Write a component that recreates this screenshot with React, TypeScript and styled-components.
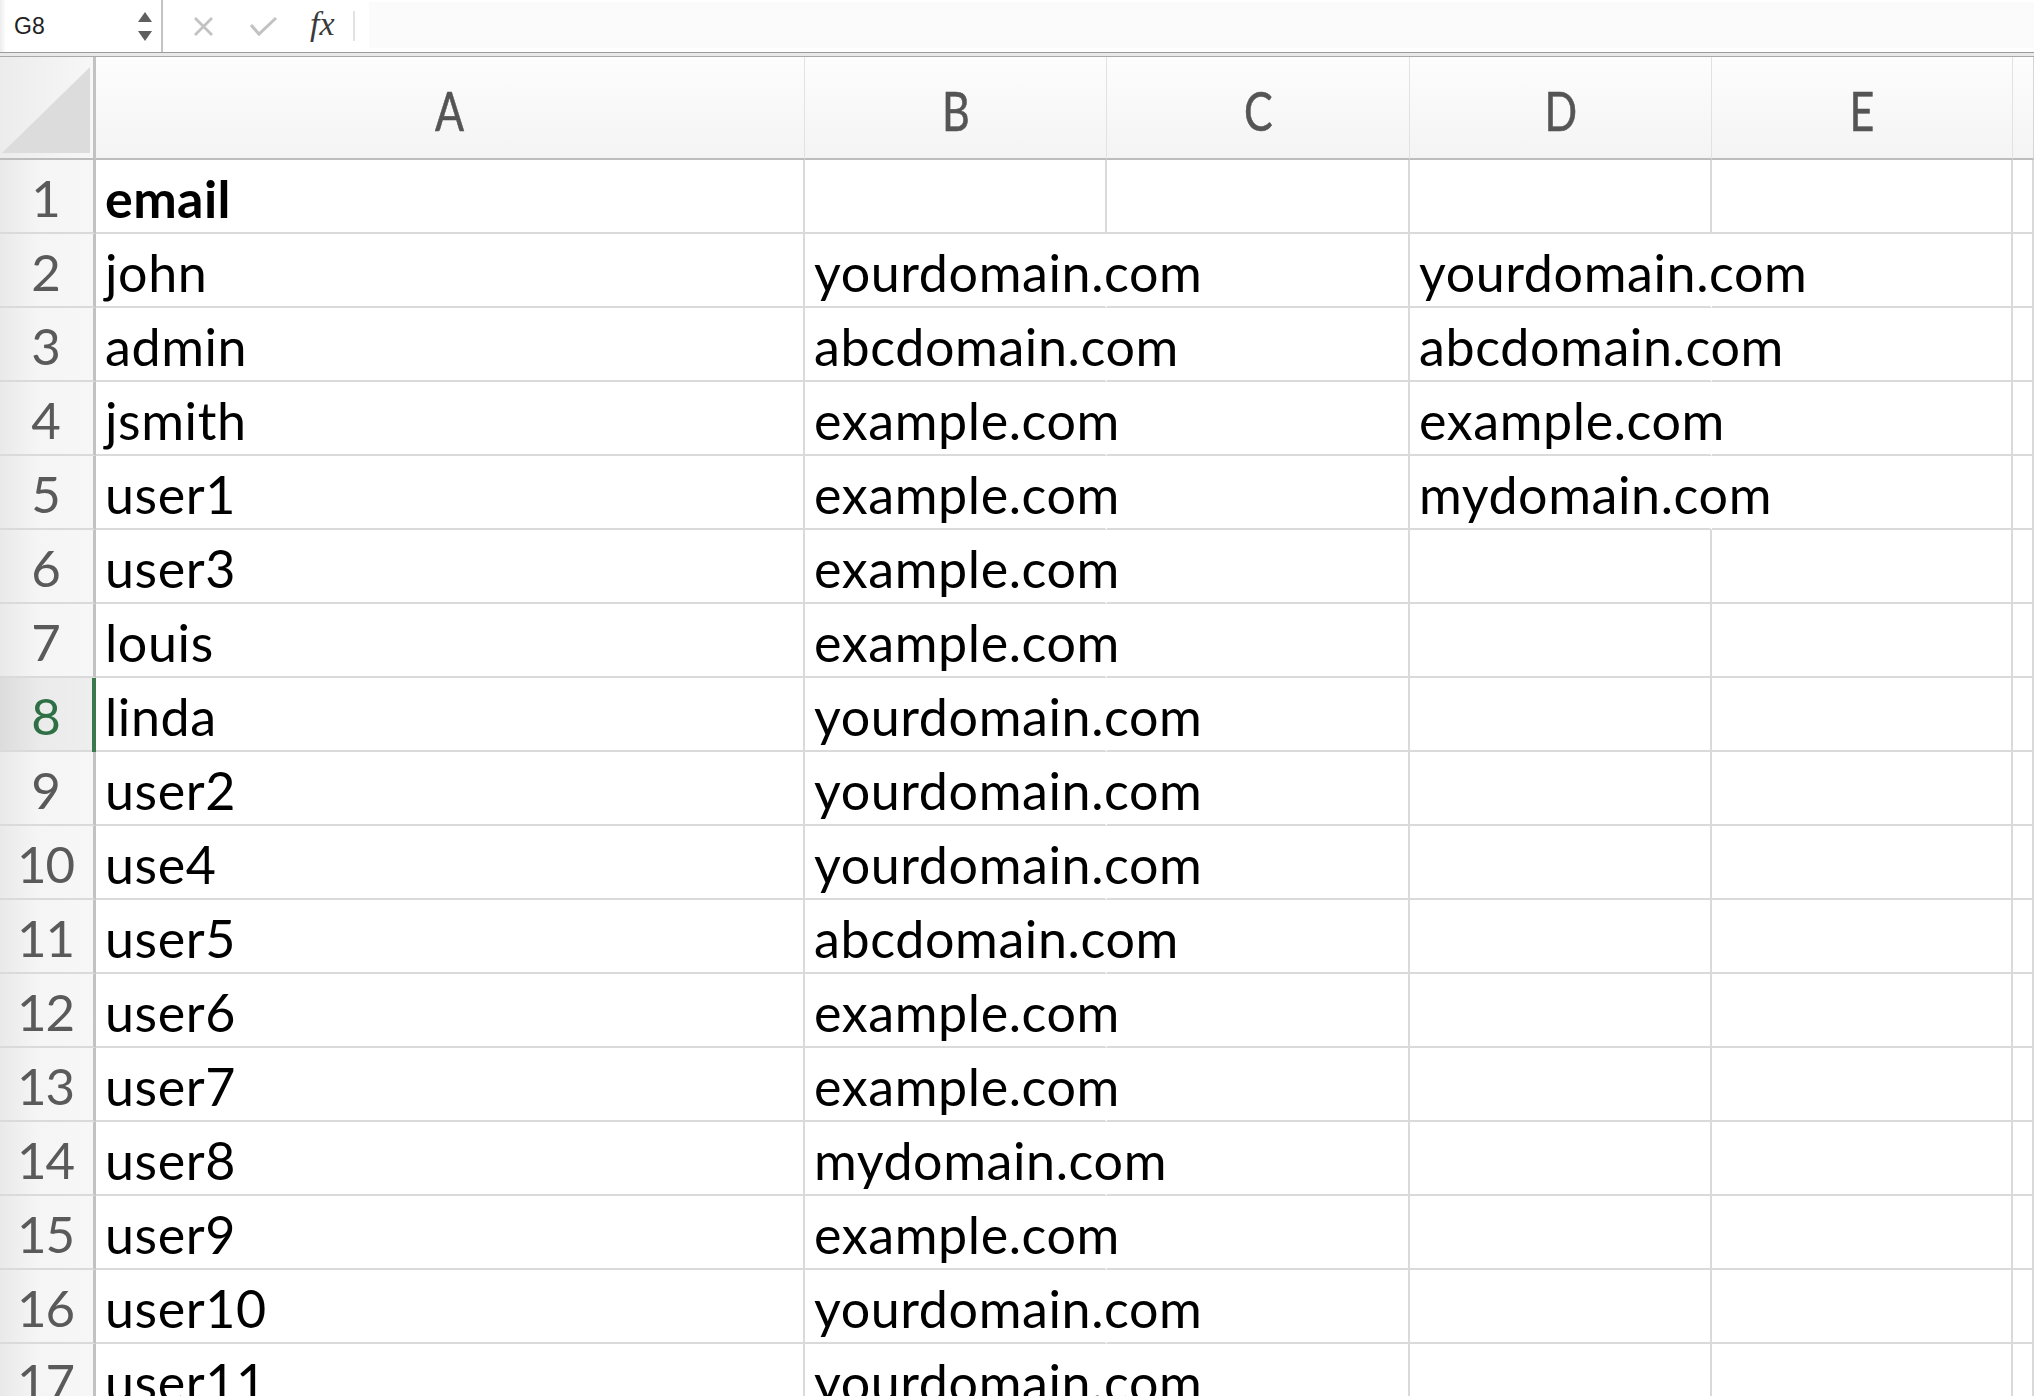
import styled, { createGlobalStyle } from "styled-components";

const GlobalStyle = createGlobalStyle`
	html, body {
		margin: 0;
		padding: 0;
		background: #fff;
		overflow: hidden;
	}
	body {
		font-family: Lato, "Open Sans", sans-serif;
	}
`;

const Page = styled.div`
	width: 2034px;
	height: 1396px;
	overflow: hidden;
	display: flex;
	flex-direction: column;
`;

const FormulaBar = styled.div`
	height: 52px;
	display: flex;
	align-items: stretch;
	background: #fff;
	border-bottom: 1px solid #9c9c9c;
	flex-shrink: 0;
`;

const NameBox = styled.div`
	width: 163px;
	display: flex;
	align-items: center;
	justify-content: space-between;
	padding: 0 9px 0 14px;
	box-sizing: border-box;
	background: linear-gradient(to right, #ececec 0px, #fff 6px);
	border-right: 2px solid #c4c4c4;
	font-family: "Liberation Sans", Arial, sans-serif;
	font-size: 23px;
	color: #222;
`;

const Spinner = styled.div`
	display: flex;
	flex-direction: column;
	gap: 9px;
`;

const Arrow = styled.div<{ $up?: boolean }>`
	width: 0;
	height: 0;
	border-left: 7px solid transparent;
	border-right: 7px solid transparent;
	${(p) =>
		p.$up
			? "border-bottom: 10px solid #5f5f5f;"
			: "border-top: 10px solid #5f5f5f;"}
`;

const Tools = styled.div`
	display: flex;
	align-items: center;
	padding-left: 30px;
`;

const ToolIcon = styled.div<{ $w: number }>`
	width: ${(p) => p.$w}px;
	display: flex;
	align-items: center;
	justify-content: flex-start;
`;

const Fx = styled.span`
	font-family: "Liberation Serif", "Times New Roman", serif;
	font-style: italic;
	font-size: 34px;
	line-height: 34px;
	color: #3a3a3a;
	margin: -4px 0 0 3px;
`;

const Separator = styled.div`
	align-self: center;
	width: 2px;
	height: 30px;
	background: #e2e2e2;
	margin: 0 14px 0 0;
`;

const FormulaInput = styled.div`
	flex: 1;
	background: #fbfbfb;
	margin: 2px 0 4px;
`;

const BarGap = styled.div`
	height: 3px;
	background: #e9e9e9;
	border-bottom: 1px solid #a9a9a9;
	flex-shrink: 0;
`;

const Grid = styled.div`
	display: grid;
	grid-template-columns: 96px 709px 302px 303px 302px 301px 1fr;
	grid-auto-rows: 74px;
	grid-template-rows: 103px;
`;

const Corner = styled.div`
	background: linear-gradient(to right, #ececec, #f7f7f7);
	border-right: 3px solid #c2c2c2;
	border-bottom: 2px solid #bdbdbd;
	display: flex;
	align-items: flex-end;
	justify-content: flex-end;
	padding: 0 3px 5px 2px;
	box-sizing: border-box;
`;

const CornerTriangle = styled.div`
	width: 88px;
	height: 86px;
	background: #dcdcdc;
	clip-path: polygon(100% 0, 100% 100%, 0 100%);
`;

const ColHeader = styled.div<{ $last?: boolean }>`
	background: linear-gradient(to bottom, #fdfdfd, #f4f4f4);
	border-bottom: 2px solid #bdbdbd;
	border-right: 1px solid ${(p) => (p.$last ? "#d6d6d6" : "#e2e2e2")};
	display: flex;
	align-items: center;
	justify-content: center;
	box-sizing: border-box;
	padding-top: 4px;
`;

const ColLetter = styled.span`
	display: inline-block;
	font-size: 55px;
	color: #555;
	transform: scaleX(0.78);
	-webkit-text-stroke: 0.6px #555;
`;

const RowHeader = styled.div<{ $active?: boolean }>`
	background: ${(p) =>
		p.$active
			? "linear-gradient(to right, #dcdcdc, #ebebeb 45%, #eeeeee)"
			: "linear-gradient(to right, #e9e9e9, #f5f5f5 40%, #f7f7f7)"};
	border-right: 3px solid #c2c2c2;
	border-bottom: 2px solid #dadada;
	box-sizing: border-box;
	display: flex;
	align-items: flex-end;
	justify-content: center;
	padding: 0 2px 9px 0;
	font-size: 51px;
	line-height: 50px;
	letter-spacing: -1px;
	color: ${(p) => (p.$active ? "#2f6f45" : "#5a5a5a")};
	position: relative;
	${(p) =>
		p.$active &&
		`
		&::after {
			content: "";
			position: absolute;
			right: -3px;
			top: 0;
			bottom: -2px;
			width: 4px;
			background: #3c7a4e;
		}
	`}
`;

const Cell = styled.div<{ $bold?: boolean; $noRight?: boolean }>`
	border-right: 2px solid ${(p) => (p.$noRight ? "transparent" : "#dadada")};
	border-bottom: 2px solid #dadada;
	box-sizing: border-box;
	display: flex;
	align-items: flex-end;
	padding: 0 0 9px 9px;
	font-size: 52px;
	line-height: 50px;
	letter-spacing: ${(p) => (p.$bold ? "0.4px" : "0.6px")};
	font-weight: ${(p) => (p.$bold ? 700 : 400)};
	color: #000;
	white-space: nowrap;
	overflow: visible;
	min-width: 0;
`;

const names = [
	"email",
	"john",
	"admin",
	"jsmith",
	"user1",
	"user3",
	"louis",
	"linda",
	"user2",
	"use4",
	"user5",
	"user6",
	"user7",
	"user8",
	"user9",
	"user10",
	"user11",
];

const domainsB = [
	"",
	"yourdomain.com",
	"abcdomain.com",
	"example.com",
	"example.com",
	"example.com",
	"example.com",
	"yourdomain.com",
	"yourdomain.com",
	"yourdomain.com",
	"abcdomain.com",
	"example.com",
	"example.com",
	"mydomain.com",
	"example.com",
	"yourdomain.com",
	"yourdomain.com",
];

const domainsD = ["", "yourdomain.com", "abcdomain.com", "example.com", "mydomain.com"];

const X = () => (
	<svg width="21" height="21" viewBox="0 0 21 21">
		<path d="M2 2 L19 19 M19 2 L2 19" stroke="#c2c2c2" strokeWidth="2.8" fill="none" />
	</svg>
);

const Check = () => (
	<svg width="29" height="21" viewBox="0 0 29 21">
		<path d="M2 9 L10 18 L27 2" stroke="#c2c2c2" strokeWidth="3" fill="none" />
	</svg>
);

const App = () => {
	return (
		<Page>
			<GlobalStyle />
			<FormulaBar>
				<NameBox>
					<span>G8</span>
					<Spinner>
						<Arrow $up />
						<Arrow />
					</Spinner>
				</NameBox>
				<Tools>
					<ToolIcon $w={56}>
						<X />
					</ToolIcon>
					<ToolIcon $w={58}>
						<Check />
					</ToolIcon>
					<ToolIcon $w={46}>
						<Fx>fx</Fx>
					</ToolIcon>
				</Tools>
				<Separator />
				<FormulaInput />
			</FormulaBar>
			<BarGap />
			<Grid>
				<Corner>
					<CornerTriangle />
				</Corner>
				{["A", "B", "C", "D", "E"].map((l) => (
					<ColHeader key={l}>
						<ColLetter>{l}</ColLetter>
					</ColHeader>
				))}
				<ColHeader $last />
				{names.map((name, i) => {
					const b = domainsB[i];
					const d = domainsD[i] || "";
					return [
						<RowHeader key={`h${i}`} $active={i === 7}>
							{i + 1}
						</RowHeader>,
						<Cell key={`a${i}`} $bold={i === 0}>
							{name}
						</Cell>,
						<Cell key={`b${i}`} $noRight={b !== ""}>
							{b}
						</Cell>,
						<Cell key={`c${i}`} />,
						<Cell key={`d${i}`} $noRight={d !== ""}>
							{d}
						</Cell>,
						<Cell key={`e${i}`} />,
						<Cell key={`f${i}`} />,
					];
				})}
			</Grid>
		</Page>
	);
};

export default App;
